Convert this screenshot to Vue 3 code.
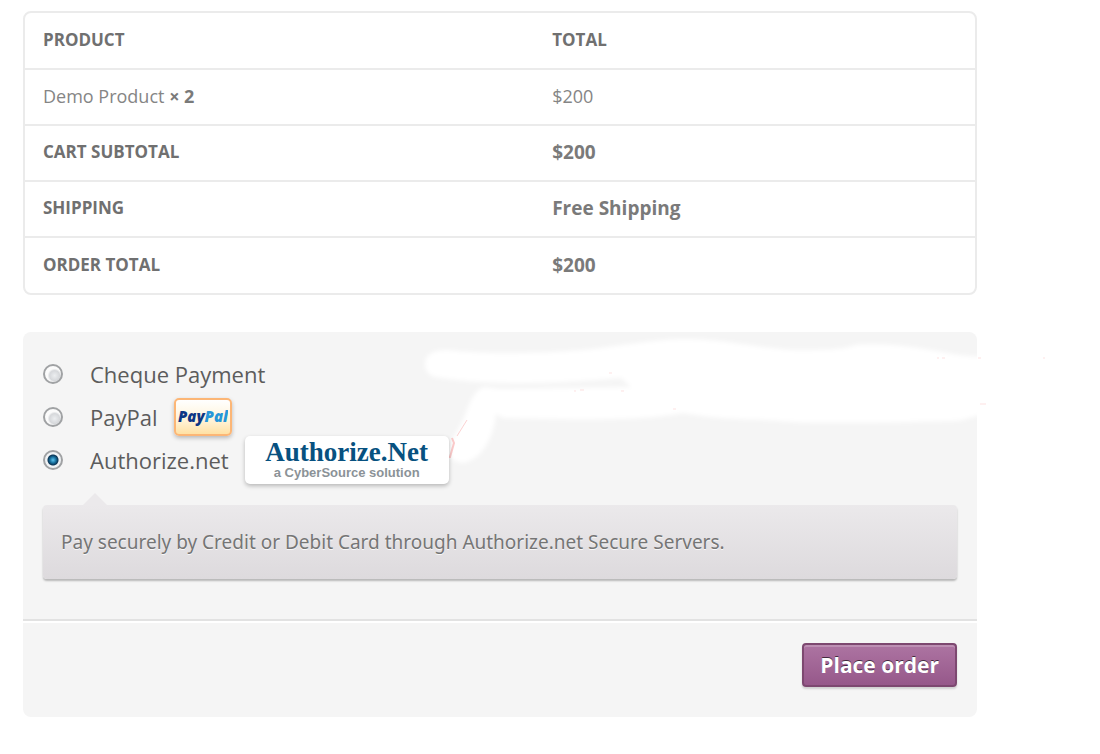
<template>
  <form class="checkout" @submit.prevent="placeOrder">
    <div class="order-table">
      <table>
        <thead>
          <tr>
            <th scope="col">Product</th>
            <th scope="col">Total</th>
          </tr>
        </thead>
        <tbody>
          <tr v-for="item in items" :key="item.name">
            <td>{{ item.name }} <strong>× {{ item.quantity }}</strong></td>
            <td>{{ item.total }}</td>
          </tr>
        </tbody>
        <tfoot>
          <tr v-for="row in totals" :key="row.label">
            <th scope="row">{{ row.label }}</th>
            <td><strong>{{ row.value }}</strong></td>
          </tr>
        </tfoot>
      </table>
    </div>

    <div class="payment">
      <svg class="brush" width="1077" height="160" viewBox="0 0 1077 160" aria-hidden="true">
        <defs>
          <filter id="soft" x="-5%" y="-20%" width="110%" height="140%">
            <feGaussianBlur stdDeviation="2" />
          </filter>
        </defs>
        <g fill="#fff" filter="url(#soft)">
          <path d="M402 32C402 22 411 18 424 18C470 23 520 21 560 18C600 14 630 7 665 7C705 8 735 16 770 18C800 18 820 18 832 13C860 10 900 16 930 22C945 25 965 25 985 25V78C954 81 945 89 930 89C880 90 820 92 770 90C725 86 705 89 660 81C620 89 560 88 480 86L473 82C471 102 461 127 440 131C424 129 424 120 428 110L437 94C445 80 447 60 461 55L477 57L608 55L598 46C545 51 470 55 412 45C405 43 402 38 402 32Z" />
        </g>
        <g fill="none" stroke="#f9b4b4" stroke-width="1">
          <path d="M444 88L434 104" opacity="0.6" />
          <path d="M429 106L431 111L427 125L425 125" stroke-width="2" opacity="0.7" />
          <path d="M551 59h2M557 58h4M598 59h3M586 41h3M650 77h3" opacity="0.4" />
          <path d="M914 26h2M919 26h3M955 26h3M1020 26h2M957 72h6" opacity="0.4" />
        </g>
      </svg>

      <div class="methods">
        <ul>
          <li v-for="method in methods" :key="method.id">
            <input
              :id="method.id"
              v-model="selected"
              type="radio"
              name="payment_method"
              :value="method.id"
            />
            <label :for="method.id">{{ method.title }}</label>
            <span v-if="method.id === 'paypal'" class="paypal-badge">
              <svg width="50" height="22" viewBox="0 0 50 22" role="img" aria-label="PayPal">
                <text x="0" y="16"><tspan fill="#0d3685">Pay</tspan><tspan fill="#2696d8">Pal</tspan></text>
              </svg>
            </span>
            <span v-if="method.id === 'authorize'" class="authorize-badge">
              <span class="authorize-name">Authorize.Net</span>
              <span class="authorize-tag">a CyberSource solution</span>
            </span>
          </li>
        </ul>
        <div class="payment-box">
          {{ current.description }}
        </div>
      </div>

      <div class="actions">
        <button type="submit">Place order</button>
      </div>
    </div>
  </form>
</template>

<script setup>
import { ref, computed } from 'vue';

const items = [
  { name: 'Demo Product', quantity: 2, total: '$200' }
];

const totals = [
  { label: 'Cart Subtotal', value: '$200' },
  { label: 'Shipping', value: 'Free Shipping' },
  { label: 'Order Total', value: '$200' }
];

const methods = [
  { id: 'cheque', title: 'Cheque Payment', description: 'Pay by cheque.' },
  { id: 'paypal', title: 'PayPal', description: 'Pay via PayPal.' },
  {
    id: 'authorize',
    title: 'Authorize.net',
    description: 'Pay securely by Credit or Debit Card through Authorize.net Secure Servers.'
  }
];

const selected = ref('authorize');
const current = computed(() => methods.find(m => m.id === selected.value));

const emit = defineEmits(['order']);

const placeOrder = () => {
  emit('order', selected.value);
};
</script>

<style>
body {
  background: #fff;
}
</style>

<style scoped>
.checkout {
  padding: 11px 123px 37px 23px;
  font-family: "Open Sans", "Noto Sans", sans-serif;
  color: #858585;
}

.order-table {
  border: 2px solid #ebebeb;
  border-radius: 8px;
  margin-bottom: 37px;
}

table {
  width: 100%;
  border-collapse: collapse;
  table-layout: fixed;
}

th,
td {
  box-sizing: border-box;
  height: 56px;
  padding: 0 18px 2px;
  text-align: left;
  font-size: 18px;
  line-height: 24px;
  border-top: 2px solid #ebebeb;
}

th:first-child,
td:first-child {
  width: 53.6%;
}

thead th {
  border-top: none;
}

th {
  font-size: 17px;
  font-weight: 700;
  text-transform: uppercase;
  color: #707070;
}

tfoot td {
  font-size: 19px;
}

strong {
  font-weight: 700;
  color: #7a7a7a;
}

.payment {
  position: relative;
  background: #f5f5f5;
  border-radius: 8px;
}

/* white strokes painted over the panel */
.brush {
  position: absolute;
  top: 0;
  left: 0;
  pointer-events: none;
}

.methods {
  padding: 20px 20px 40px;
  border-bottom: 2px solid #e2e2e2;
}

ul {
  list-style: none;
  margin: 0 0 24px;
  padding: 0;
}

li {
  display: flex;
  align-items: center;
  height: 43px;
}

input {
  appearance: none;
  box-sizing: border-box;
  width: 20px;
  height: 20px;
  margin: 0 27px 0 0;
  border: 2px solid #a0a2a4;
  border-radius: 50%;
  background: radial-gradient(circle at 60% 60%, #eceef0 0, #d6d8db 5px, #fbfbfb 7px);
}

input:checked {
  background: radial-gradient(circle at 50% 50%, #5cc4ee 0, #17719f 3px, #0b3555 5px, #f0f3f5 6px);
}

label {
  font-size: 22px;
  line-height: 30px;
  color: #5c5c5c;
}

.paypal-badge,
.authorize-badge {
  position: relative;
  box-sizing: border-box;
  display: flex;
  align-items: center;
  justify-content: center;
  margin-left: 16px;
  border-radius: 5px;
  box-shadow: 0 2px 4px rgba(0, 0, 0, 0.25);
}

.paypal-badge {
  width: 58px;
  height: 38px;
  border: 2px solid #fcb676;
  background: linear-gradient(#fff, #fff3d8 60%, #ffe1a4);
}

.paypal-badge text {
  font: italic 800 15px "Open Sans", sans-serif;
}

.authorize-badge {
  flex-direction: column;
  width: 204px;
  height: 48px;
  background: #fff;
}

.authorize-name {
  font: 700 27px/26px "Liberation Serif", serif;
  color: #075180;
}

.authorize-tag {
  font: 700 13px/16px "Liberation Sans", sans-serif;
  color: #8b9297;
}

.payment-box {
  position: relative;
  padding: 24px 18px;
  border-radius: 4px;
  background: linear-gradient(#ebe9eb, #dddadd);
  box-shadow: 0 2px 2px rgba(0, 0, 0, 0.25);
  font-family: "Noto Sans", sans-serif;
  font-size: 19px;
  line-height: 26px;
  color: #757575;
  text-shadow: 0 1px 0 rgba(255, 255, 255, 0.8);
}

/* arrow pointing at the chosen method */
.payment-box::before {
  content: "";
  position: absolute;
  bottom: 100%;
  left: 40px;
  border: 12px solid transparent;
  border-top-width: 0;
  border-bottom-color: #ebe9eb;
}

.actions {
  display: flex;
  justify-content: flex-end;
  padding: 20px 20px 30px;
  border-top: 2px solid #fff;
}

button {
  padding: 5px 16px;
  border: 2px solid #7d4870;
  border-radius: 4px;
  background: linear-gradient(#ad74a2, #96588a);
  box-shadow: inset 0 2px 0 rgba(255, 255, 255, 0.2), 0 2px 2px rgba(0, 0, 0, 0.15);
  font: 700 21px/30px "Open Sans", "Noto Sans", sans-serif;
  color: #fff;
  text-shadow: 0 -1px 0 rgba(0, 0, 0, 0.6);
  cursor: pointer;
}
</style>
